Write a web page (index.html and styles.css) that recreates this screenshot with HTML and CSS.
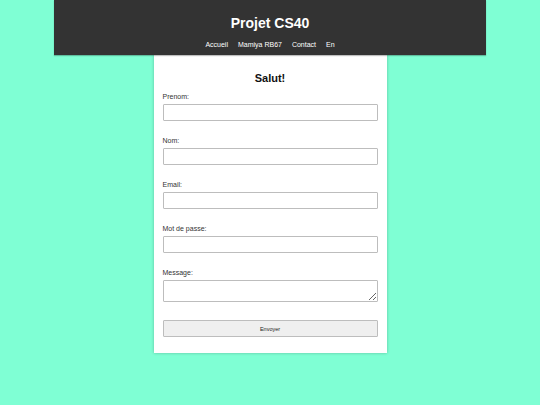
FILE: index.html
```html
<!DOCTYPE html>
<html lang="fr">
<head>
<meta charset="utf-8">
<title>Projet CS40</title>
<link rel="stylesheet" href="styles.css">
</head>
<body>
<header class="site-header">
  <h1 class="site-title">Projet CS40</h1>
  <nav class="site-nav">
    <a href="#">Accueil</a>
    <a href="#">Mamiya RB67</a>
    <a href="#">Contact</a>
    <a href="#">En</a>
  </nav>
</header>
<main class="card">
  <h2 class="card-title">Salut!</h2>
  <form class="form">
    <div class="field">
      <label class="label">Prenom:</label>
      <input class="input" type="text">
    </div>
    <div class="field">
      <label class="label">Nom:</label>
      <input class="input" type="text">
    </div>
    <div class="field">
      <label class="label">Email:</label>
      <input class="input" type="email">
    </div>
    <div class="field">
      <label class="label">Mot de passe:</label>
      <input class="input" type="password">
    </div>
    <div class="field">
      <label class="label">Message:</label>
      <textarea class="input textarea"></textarea>
    </div>
    <button class="button" type="button">Envoyer</button>
  </form>
</main>
</body>
</html>
```
FILE: styles.css
```css
html, body {
  margin: 0;
  padding: 0;
}
body {
  background: #7fffd4;
  font-family: "Liberation Sans", Arial, sans-serif;
  min-height: 405px;
}
.site-header {
  width: 432px;
  height: 55px;
  margin: 0 auto;
  background: #333333;
  color: #fff;
  box-sizing: border-box;
  padding-top: 15px;
  text-align: center;
  box-shadow: 0 1px 1px rgba(0,0,0,0.25);
  position: relative;
  z-index: 1;
}
.site-title {
  margin: 0;
  font-size: 14px;
  line-height: 16px;
  font-weight: bold;
}
.site-nav {
  margin-top: 9px;
  display: flex;
  justify-content: center;
  gap: 10px;
  font-size: 7px;
  line-height: 10px;
}
.site-nav a {
  color: #fff;
  text-decoration: none;
}
.card {
  width: 233px;
  margin: 0 auto;
  background: #fff;
  box-sizing: border-box;
  padding: 16px 9px 16px;
  box-shadow: 0 0 3px rgba(0,0,0,0.25);
}
.card-title {
  margin: 0 0 6px;
  text-align: center;
  font-size: 11px;
  line-height: 14px;
  font-weight: bold;
  color: #111;
}
.form {
  display: flex;
  flex-direction: column;
}
.field {
  display: flex;
  flex-direction: column;
  margin-bottom: 14px;
}
.label {
  font-size: 7px;
  line-height: 11px;
  color: #333;
  margin-bottom: 2px;
}
.input {
  display: block;
  width: 100%;
  height: 17px;
  box-sizing: border-box;
  border: 1px solid #bdbdbd;
  border-radius: 1px;
  margin: 0;
  padding: 0 3px;
  font-size: 7px;
  background: #fff;
}
.textarea {
  height: 22px;
  resize: vertical;
}
.field:last-of-type {
  margin-bottom: 18px;
}
.button {
  display: block;
  width: 100%;
  height: 17px;
  box-sizing: border-box;
  border: 1px solid #bdbdbd;
  border-radius: 1px;
  background: #efefef;
  font-family: "Liberation Sans", Arial, sans-serif;
  font-size: 5.5px;
  color: #222;
  padding: 0;
}
```
